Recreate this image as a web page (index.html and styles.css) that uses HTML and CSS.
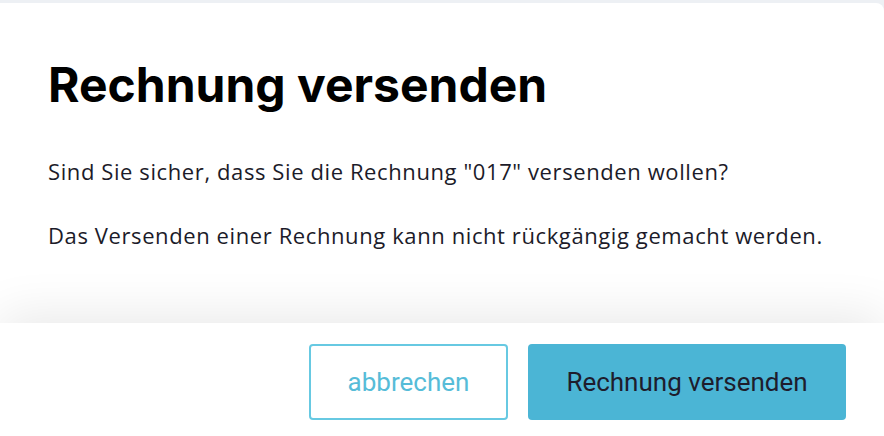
FILE: index.html
```html
<!DOCTYPE html>
<html lang="de">
<head>
    <meta charset="UTF-8">
    <meta name="viewport" content="width=device-width, initial-scale=1.0">
    <title>Rechnung versenden</title>
    <link rel="stylesheet" href="styles.css">
</head>
<body>
    <!-- Dialog -->
    <div class="dialog">
        <div class="dialog-body">
            <h1>Rechnung versenden</h1>
            <p>Sind Sie sicher, dass Sie die Rechnung "017" versenden wollen?</p>
            <p>Das Versenden einer Rechnung kann nicht rückgängig gemacht werden.</p>
        </div>

        <!-- Actions -->
        <div class="dialog-footer">
            <button class="btn btn-outline">abbrechen</button>
            <button class="btn btn-primary">Rechnung versenden</button>
        </div>
    </div>
</body>
</html>
```

FILE: styles.css
```css
body {
    margin: 0;
    background: #edf0f4;
    font-family: "Open Sans", Lato, sans-serif;
    color: #1c1b29;
    overflow: hidden;
}
.dialog {
    margin-top: 3px;
    background: #fff;
    border-top-right-radius: 8px;
    height: 433px;
}
.dialog-body {
    box-sizing: border-box;
    height: 320px;
    padding: 54px 48px 0;
}
h1 {
    margin: 0 0 44px;
    font-family: Inter, sans-serif;
    font-size: 48px;
    line-height: 56px;
    font-weight: 700;
    color: #000;
}
p {
    margin: 0 0 36px;
    font-size: 22px;
    line-height: 28px;
    letter-spacing: 0.6px;
}
.dialog-footer {
    position: relative;
    display: flex;
    justify-content: flex-end;
    gap: 20px;
    padding: 21px 38px 0 0;
    height: 113px;
    background: #fff;
    box-shadow: 0 -8px 50px rgba(0, 0, 0, 0.09);
}
.btn {
    height: 76px;
    border-radius: 4px;
    font-family: Roboto, sans-serif;
    font-size: 26px;
    cursor: pointer;
}
.btn-outline {
    width: 199px;
    background: #fff;
    border: 2px solid #67c9e2;
    color: #56bcd8;
}
.btn-primary {
    width: 318px;
    background: #4bb5d5;
    border: none;
    color: #1e1d2d;
}
```
